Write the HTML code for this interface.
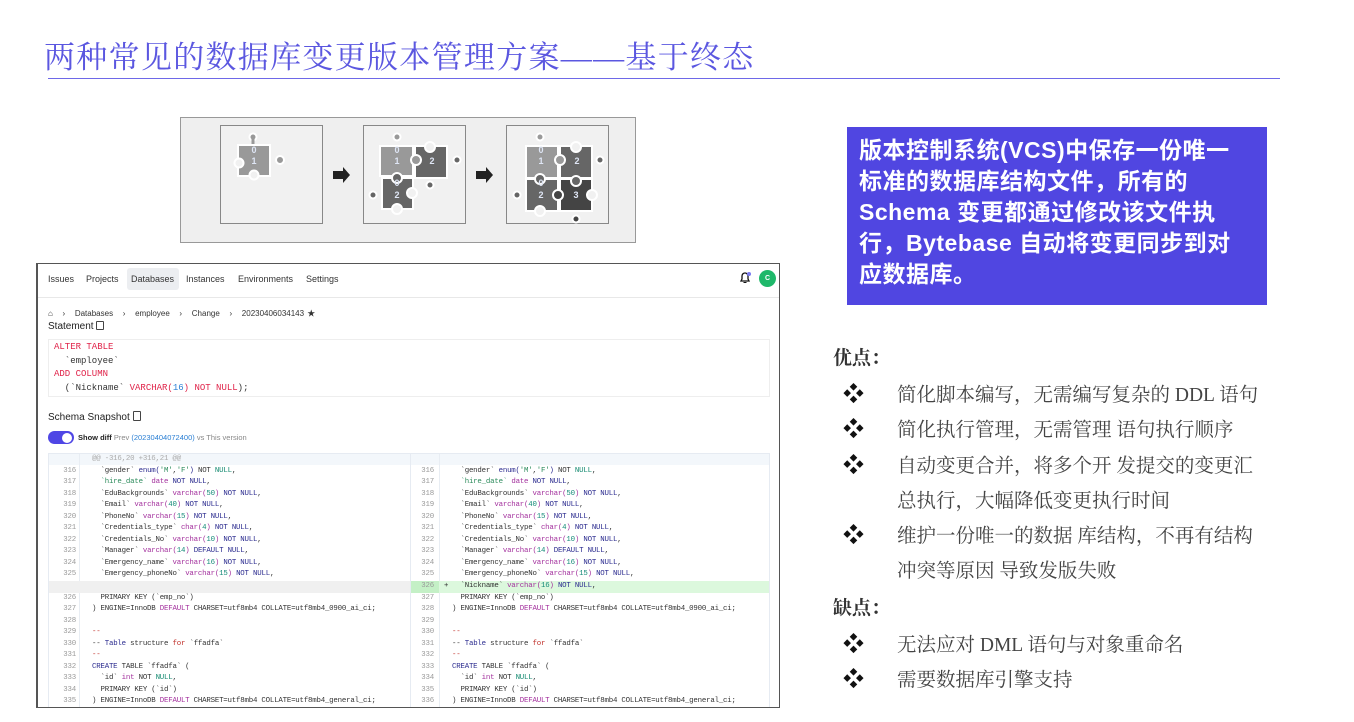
<!DOCTYPE html>
<html><head><meta charset="utf-8">
<style>
*{margin:0;padding:0;box-sizing:border-box}
body{width:1354px;height:722px;background:#fff;position:relative;overflow:hidden;font-family:"Liberation Sans","Noto Sans CJK SC",sans-serif}
.a{position:absolute;white-space:nowrap}
.title{left:44px;top:32px;font-family:"Liberation Serif","Noto Serif CJK SC",serif;font-size:31px;color:#5b57e0;letter-spacing:1.3px}
.hr{left:48px;top:78px;width:1232px;height:1px;background:#6e68e8}
.vbox{left:847px;top:127px;width:420px;height:178px;background:#5046e1}
.vtxt{left:859px;top:135px;color:#fff;font-weight:bold;font-size:23px;line-height:31px;letter-spacing:0.5px;font-family:"Liberation Sans","Noto Sans CJK SC",sans-serif}
.h{font-family:"Liberation Serif","Noto Serif CJK SC",serif;font-size:19px;font-weight:bold;color:#333}
.li{font-family:"Liberation Serif","Noto Serif CJK SC",serif;font-size:19.5px;color:#444}
.bul{font-size:21px;font-weight:bold;color:#111;left:843px}
.shot{left:36px;top:263px;width:744px;height:445px;border:1.5px solid #555;border-left-width:2px;background:#fff;overflow:hidden}
.nav{font-size:9px;color:#333}
.mono{font-family:"Liberation Mono",monospace;font-size:7.4px;letter-spacing:-0.2px;color:#333}
.k{color:#e0244a}.b{color:#2a7fd4}
.r{height:11.55px;line-height:11.55px}
.n{color:#999;text-align:right;width:22px}
.kw{color:#2b2b8f}.ty{color:#a3309d}.nu{color:#138a78}.st{color:#2a8a5a}.rd{color:#c0302a}.nl{color:#148a70}
</style></head><body>
<div class="a title">两种常见的数据库变更版本管理方案——基于终态</div>
<div class="a hr"></div>

<svg class="a" style="left:0;top:0" width="660" height="250" viewBox="0 0 660 250">
<rect x="180.5" y="117.5" width="455" height="125" fill="#efefef" stroke="#999"/>
<rect x="220.5" y="125.5" width="102" height="98" fill="#f1f1f1" stroke="#888"/>
<rect x="363.5" y="125.5" width="102" height="98" fill="#f1f1f1" stroke="#888"/>
<rect x="506.5" y="125.5" width="102" height="98" fill="#f1f1f1" stroke="#888"/>
<g stroke="#fff" stroke-width="2">
<circle cx="253" cy="137" r="3.5" fill="#999"/><rect x="251.5" y="138" width="3" height="8" fill="#999" stroke="none"/>
<rect x="238" y="145" width="32" height="31" fill="#999"/>
<circle cx="280" cy="160" r="4" fill="#999"/>
<circle cx="239" cy="163" r="4.5" fill="#f1f1f1"/><circle cx="254" cy="175" r="4.5" fill="#f1f1f1"/>
<circle cx="397" cy="137" r="3.5" fill="#999"/>
<rect x="380" y="146" width="33" height="30" fill="#999"/>
<rect x="415" y="146" width="32" height="32" fill="#666"/>
<circle cx="457" cy="160" r="3.5" fill="#666"/><circle cx="430" cy="185" r="3.5" fill="#666"/>
<circle cx="416" cy="160" r="5" fill="#999"/><circle cx="430" cy="147" r="5" fill="#f1f1f1"/>
<rect x="382" y="178" width="31" height="31" fill="#666"/>
<circle cx="373" cy="195" r="3.5" fill="#666"/><circle cx="397" cy="178" r="5" fill="#666"/>
<circle cx="412" cy="193" r="5" fill="#f1f1f1"/><circle cx="397" cy="209" r="5" fill="#f1f1f1"/>
<circle cx="540" cy="137" r="3.5" fill="#999"/>
<rect x="526" y="146" width="32" height="32" fill="#999"/>
<rect x="560" y="146" width="32" height="32" fill="#666"/>
<circle cx="600" cy="160" r="3.5" fill="#666"/><circle cx="560" cy="160" r="5" fill="#999"/><circle cx="576" cy="147" r="5" fill="#f1f1f1"/>
<rect x="526" y="179" width="32" height="32" fill="#666"/>
<circle cx="517" cy="195" r="3.5" fill="#666"/><circle cx="540" cy="179" r="5" fill="#666"/>
<rect x="560" y="179" width="32" height="32" fill="#444"/>
<circle cx="558" cy="195" r="5" fill="#444"/><circle cx="576" cy="181" r="5" fill="#666"/>
<circle cx="592" cy="195" r="5" fill="#f1f1f1"/><circle cx="576" cy="219" r="3.5" fill="#444"/>
<circle cx="540" cy="211" r="5" fill="#f1f1f1"/>
</g>
<g fill="#dfe6f5" font-size="9" font-weight="bold" font-family="Liberation Sans" text-anchor="middle">
<text x="254" y="153">0</text><text x="254" y="164">1</text>
<text x="397" y="153">0</text><text x="397" y="164">1</text><text x="432" y="164">2</text>
<text x="397" y="186">0</text><text x="397" y="198">2</text>
<text x="541" y="153">0</text><text x="541" y="164">1</text><text x="577" y="164">2</text>
<text x="541" y="186">0</text><text x="541" y="198">2</text><text x="576" y="198">3</text>
</g>
<path d="M333 171h10v-4l7 8-7 8v-4h-10z" fill="#222"/>
<path d="M476 171h10v-4l7 8-7 8v-4h-10z" fill="#222"/>
</svg>

<div class="a vbox"></div>
<div class="a vtxt">版本控制系统(VCS)中保存一份唯一<br>标准的数据库结构文件，所有的<br>Schema 变更都通过修改该文件执<br>行，Bytebase 自动将变更同步到对<br>应数据库。</div>

<div class="a h" style="left:833px;top:343px">优点：</div>
<div class="a bul" style="top:378px">❖</div><div class="a li" style="left:897px;top:379px">简化脚本编写，无需编写复杂的 DDL 语句</div>
<div class="a bul" style="top:413px">❖</div><div class="a li" style="left:897px;top:414px">简化执行管理，无需管理 语句执行顺序</div>
<div class="a bul" style="top:449px">❖</div><div class="a li" style="left:897px;top:450px">自动变更合并，将多个开 发提交的变更汇</div>
<div class="a li" style="left:897px;top:485px">总执行，大幅降低变更执行时间</div>
<div class="a bul" style="top:519px">❖</div><div class="a li" style="left:897px;top:520px">维护一份唯一的数据 库结构，不再有结构</div>
<div class="a li" style="left:897px;top:555px">冲突等原因 导致发版失败</div>
<div class="a h" style="left:833px;top:593px">缺点：</div>
<div class="a bul" style="top:628px">❖</div><div class="a li" style="left:897px;top:629px">无法应对 DML 语句与对象重命名</div>
<div class="a bul" style="top:663px">❖</div><div class="a li" style="left:897px;top:664px">需要数据库引擎支持</div>

<div class="a shot">
 <div class="a nav" style="left:10px;top:10px">Issues</div>
 <div class="a nav" style="left:48px;top:10px">Projects</div>
 <div class="a" style="left:89px;top:4px;width:52px;height:22px;background:#eceef1;border-radius:3px"></div>
 <div class="a nav" style="left:93px;top:10px">Databases</div>
 <div class="a nav" style="left:148px;top:10px">Instances</div>
 <div class="a nav" style="left:200px;top:10px">Environments</div>
 <div class="a nav" style="left:268px;top:10px">Settings</div>
 <svg class="a" style="left:700px;top:7px" width="14" height="14"><path d="M3 10h8l-1-2V5a3 3 0 0 0-6 0v3z" fill="none" stroke="#111" stroke-width="1.3"/><path d="M5.5 11.5h3" stroke="#111"/><circle cx="11" cy="3" r="2" fill="#7b7bf0"/></svg>
 <div class="a" style="left:721px;top:6px;width:17px;height:17px;border-radius:50%;background:#1fb86a;color:#fff;font-size:7px;font-weight:bold;text-align:center;line-height:17px">C</div>
 <div class="a" style="left:0;top:33px;width:744px;height:1px;background:#e8e8e8"></div>
 <div class="a" style="left:10px;top:44px;font-size:8px;color:#333;word-spacing:1px">&#8962; &nbsp;&nbsp;›&nbsp;&nbsp; Databases &nbsp;&nbsp;›&nbsp;&nbsp; employee &nbsp;&nbsp;›&nbsp;&nbsp; Change &nbsp;&nbsp;›&nbsp;&nbsp; 20230406034143 ★</div>
 <div class="a" style="left:10px;top:57px;font-size:10px;color:#222">Statement <span style="display:inline-block;width:8px;height:9px;border:1px solid #444;border-radius:1px;vertical-align:-1px"></span></div>
 <div class="a" style="left:10px;top:75px;width:722px;height:58px;border:1px solid #eee"></div>
 <div class="a mono" style="left:16px;top:77px;font-size:9px;line-height:13.5px;letter-spacing:0">
  <span class="k">ALTER TABLE</span><br>&nbsp;&nbsp;`employee`<br><span class="k">ADD COLUMN</span><br>&nbsp;&nbsp;(`Nickname` <span class="k">VARCHAR(</span><span class="b">16</span><span class="k">) NOT NULL</span>);
 </div>
 <div class="a" style="left:10px;top:147px;font-size:10px;color:#222">Schema Snapshot <span style="display:inline-block;width:8px;height:10px;border:1px solid #444;border-radius:1px;vertical-align:-1px"></span></div>
 <div class="a" style="left:10px;top:167px;width:26px;height:13px;border-radius:7px;background:#4f46e5"></div>
 <div class="a" style="left:24px;top:168.5px;width:10px;height:10px;border-radius:50%;background:#fff"></div>
 <div class="a" style="left:40px;top:169px;font-size:7.5px;color:#222;font-weight:bold">Show diff <span style="font-weight:normal;color:#888">Prev <span style="color:#2a7fd4">(20230404072400)</span> vs This version</span></div>

 <div class="a" style="left:10px;top:189px;width:722px;height:260px;border:1px solid #e6ebf2"></div>
 <div class="a" style="left:11px;top:190px;width:720px;height:11px;background:#f3f7fb"></div>
 <div class="a" style="left:41px;top:190px;width:1px;height:260px;background:#e8edf3"></div>
 <div class="a" style="left:372px;top:190px;width:1px;height:260px;background:#e6ebf2"></div>
 <div class="a" style="left:401px;top:190px;width:1px;height:260px;background:#e8edf3"></div>
 <div class="a" style="left:11px;top:317px;width:361px;height:11.5px;background:#f0f0f0"></div>
 <div class="a" style="left:373px;top:317px;width:358px;height:11.5px;background:#dcf8dd"></div>
 <div class="a" style="left:373px;top:317px;width:28px;height:11.5px;background:#c4f0c6"></div>
 <div class="a mono" style="left:54px;top:191px;color:#aaa">@@ -316,20 +316,21 @@</div>

 <div class="a mono" style="left:16px;top:201.5px">
  <div class="r n">316</div><div class="r n">317</div><div class="r n">318</div><div class="r n">319</div><div class="r n">320</div><div class="r n">321</div><div class="r n">322</div><div class="r n">323</div><div class="r n">324</div><div class="r n">325</div><div class="r n">&nbsp;</div><div class="r n">326</div><div class="r n">327</div><div class="r n">328</div><div class="r n">329</div><div class="r n">330</div><div class="r n">331</div><div class="r n">332</div><div class="r n">333</div><div class="r n">334</div><div class="r n">335</div>
 </div>
 <div class="a mono" style="left:54px;top:201.5px">
  <div class="r">&nbsp;&nbsp;`gender` <span class="kw">enum(</span><span class="st">'M'</span>,<span class="st">'F'</span><span class="kw">)</span> NOT <span class="nl">NULL</span>,</div>
  <div class="r">&nbsp;&nbsp;<span class="st">`hire_date`</span> <span class="ty">date</span> <span class="kw">NOT NULL</span>,</div>
  <div class="r">&nbsp;&nbsp;`EduBackgrounds` <span class="ty">varchar(</span><span class="nu">50</span><span class="ty">)</span> <span class="kw">NOT NULL</span>,</div>
  <div class="r">&nbsp;&nbsp;`Email` <span class="ty">varchar(</span><span class="nu">40</span><span class="ty">)</span> <span class="kw">NOT NULL</span>,</div>
  <div class="r">&nbsp;&nbsp;`PhoneNo` <span class="ty">varchar(</span><span class="nu">15</span><span class="ty">)</span> <span class="kw">NOT NULL</span>,</div>
  <div class="r">&nbsp;&nbsp;`Credentials_type` <span class="ty">char(</span><span class="nu">4</span><span class="ty">)</span> <span class="kw">NOT NULL</span>,</div>
  <div class="r">&nbsp;&nbsp;`Credentials_No` <span class="ty">varchar(</span><span class="nu">10</span><span class="ty">)</span> <span class="kw">NOT NULL</span>,</div>
  <div class="r">&nbsp;&nbsp;`Manager` <span class="ty">varchar(</span><span class="nu">14</span><span class="ty">)</span> <span class="kw">DEFAULT NULL</span>,</div>
  <div class="r">&nbsp;&nbsp;`Emergency_name` <span class="ty">varchar(</span><span class="nu">16</span><span class="ty">)</span> <span class="kw">NOT NULL</span>,</div>
  <div class="r">&nbsp;&nbsp;`Emergency_phoneNo` <span class="ty">varchar(</span><span class="nu">15</span><span class="ty">)</span> <span class="kw">NOT NULL</span>,</div>
  <div class="r">&nbsp;</div>
  <div class="r">&nbsp;&nbsp;PRIMARY KEY (`emp_no`)</div>
  <div class="r">) ENGINE=InnoDB <span class="ty">DEFAULT</span> CHARSET=utf8mb4 COLLATE=utf8mb4_0900_ai_ci;</div>
  <div class="r">&nbsp;</div>
  <div class="r"><span class="rd">--</span></div>
  <div class="r">-- <span class="kw">Table</span> structure <span class="rd">for</span> `ffadfa`</div>
  <div class="r"><span class="rd">--</span></div>
  <div class="r"><span class="kw">CREATE</span> TABLE `ffadfa` (</div>
  <div class="r">&nbsp;&nbsp;`id` <span class="ty">int</span> NOT <span class="nl">NULL</span>,</div>
  <div class="r">&nbsp;&nbsp;PRIMARY KEY (`id`)</div>
  <div class="r">) ENGINE=InnoDB <span class="ty">DEFAULT</span> CHARSET=utf8mb4 COLLATE=utf8mb4_general_ci;</div>
 </div>

 <div class="a mono" style="left:374px;top:201.5px">
  <div class="r n">316</div><div class="r n">317</div><div class="r n">318</div><div class="r n">319</div><div class="r n">320</div><div class="r n">321</div><div class="r n">322</div><div class="r n">323</div><div class="r n">324</div><div class="r n">325</div><div class="r n">326</div><div class="r n">327</div><div class="r n">328</div><div class="r n">329</div><div class="r n">330</div><div class="r n">331</div><div class="r n">332</div><div class="r n">333</div><div class="r n">334</div><div class="r n">335</div><div class="r n">336</div>
 </div>
 <div class="a mono" style="left:406px;top:317px;line-height:11.5px">+</div>
 <div class="a mono" style="left:414px;top:201.5px">
  <div class="r">&nbsp;&nbsp;`gender` <span class="kw">enum(</span><span class="st">'M'</span>,<span class="st">'F'</span><span class="kw">)</span> NOT <span class="nl">NULL</span>,</div>
  <div class="r">&nbsp;&nbsp;<span class="st">`hire_date`</span> <span class="ty">date</span> <span class="kw">NOT NULL</span>,</div>
  <div class="r">&nbsp;&nbsp;`EduBackgrounds` <span class="ty">varchar(</span><span class="nu">50</span><span class="ty">)</span> <span class="kw">NOT NULL</span>,</div>
  <div class="r">&nbsp;&nbsp;`Email` <span class="ty">varchar(</span><span class="nu">40</span><span class="ty">)</span> <span class="kw">NOT NULL</span>,</div>
  <div class="r">&nbsp;&nbsp;`PhoneNo` <span class="ty">varchar(</span><span class="nu">15</span><span class="ty">)</span> <span class="kw">NOT NULL</span>,</div>
  <div class="r">&nbsp;&nbsp;`Credentials_type` <span class="ty">char(</span><span class="nu">4</span><span class="ty">)</span> <span class="kw">NOT NULL</span>,</div>
  <div class="r">&nbsp;&nbsp;`Credentials_No` <span class="ty">varchar(</span><span class="nu">10</span><span class="ty">)</span> <span class="kw">NOT NULL</span>,</div>
  <div class="r">&nbsp;&nbsp;`Manager` <span class="ty">varchar(</span><span class="nu">14</span><span class="ty">)</span> <span class="kw">DEFAULT NULL</span>,</div>
  <div class="r">&nbsp;&nbsp;`Emergency_name` <span class="ty">varchar(</span><span class="nu">16</span><span class="ty">)</span> <span class="kw">NOT NULL</span>,</div>
  <div class="r">&nbsp;&nbsp;`Emergency_phoneNo` <span class="ty">varchar(</span><span class="nu">15</span><span class="ty">)</span> <span class="kw">NOT NULL</span>,</div>
  <div class="r">&nbsp;&nbsp;`Nickname` <span class="ty">varchar(</span><span class="nu">16</span><span class="ty">)</span> <span class="kw">NOT NULL</span>,</div>
  <div class="r">&nbsp;&nbsp;PRIMARY KEY (`emp_no`)</div>
  <div class="r">) ENGINE=InnoDB <span class="ty">DEFAULT</span> CHARSET=utf8mb4 COLLATE=utf8mb4_0900_ai_ci;</div>
  <div class="r">&nbsp;</div>
  <div class="r"><span class="rd">--</span></div>
  <div class="r">-- <span class="kw">Table</span> structure <span class="rd">for</span> `ffadfa`</div>
  <div class="r"><span class="rd">--</span></div>
  <div class="r"><span class="kw">CREATE</span> TABLE `ffadfa` (</div>
  <div class="r">&nbsp;&nbsp;`id` <span class="ty">int</span> NOT <span class="nl">NULL</span>,</div>
  <div class="r">&nbsp;&nbsp;PRIMARY KEY (`id`)</div>
  <div class="r">) ENGINE=InnoDB <span class="ty">DEFAULT</span> CHARSET=utf8mb4 COLLATE=utf8mb4_general_ci;</div>
 </div>
</div>
</body></html>
